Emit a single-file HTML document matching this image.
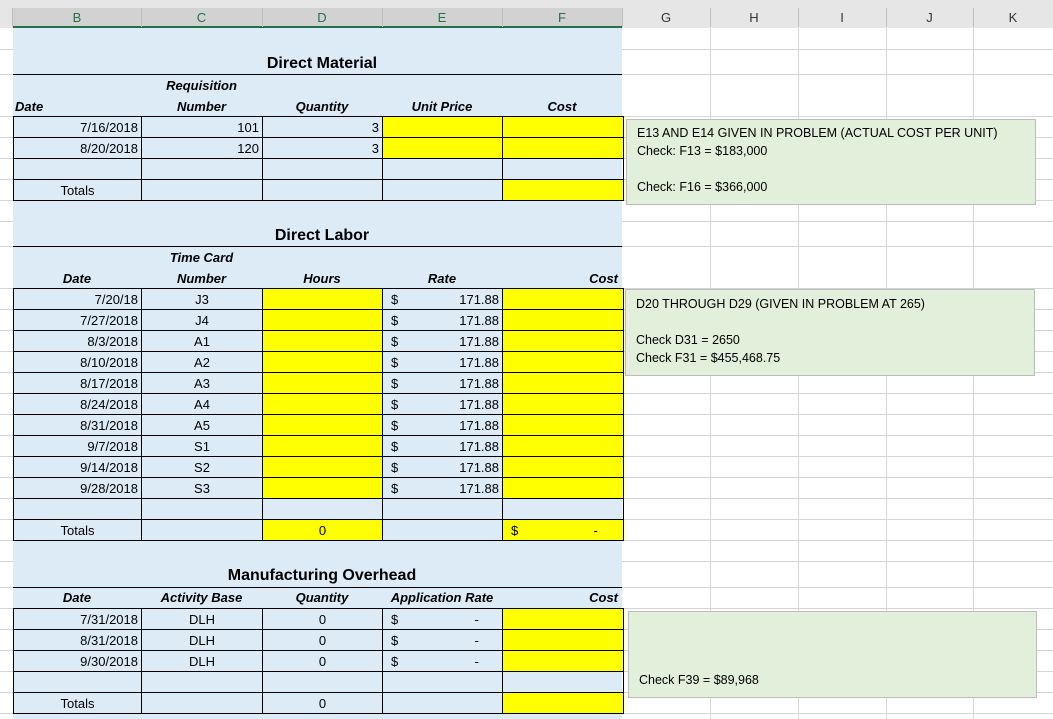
<!DOCTYPE html>
<html><head><meta charset="utf-8"><style>
*{margin:0;padding:0;box-sizing:border-box}
body{width:1053px;height:719px;overflow:hidden;background:#fff;position:relative;font-family:"Liberation Sans",Arial,sans-serif;font-size:13px;color:#000}
.a{position:absolute}
.hl{position:absolute;height:1px;background:#d4d4d4}
.vl{position:absolute;width:1px;background:#d4d4d4}
table{position:absolute;border-collapse:collapse;table-layout:fixed}
td{border:1px solid #000;height:21px;padding:0 3px;white-space:nowrap;font-size:13px;line-height:19px}
.y{background:#ffff00}
.r{text-align:right}.c{text-align:center}
.t{position:absolute;font-weight:bold;font-size:16px;white-space:nowrap}
.h{position:absolute;font-weight:bold;font-style:italic;white-space:nowrap;font-size:13px}
.box{position:absolute;background:#e2efda;border:1px solid #bcbcbc;padding:0 0 0 10px;font-size:12.5px;line-height:18px}
.dol{display:flex;justify-content:space-between;padding-left:5px}
</style></head><body>
<div class="a" style="left:0;top:0;width:1053px;height:28px;background:#e6e6e6"></div>
<div class="a" style="left:13px;top:8px;width:609px;height:19px;background:#d2d2d2"></div>
<div class="a" style="left:13px;top:26px;width:609px;height:2px;background:#217346"></div>
<div class="vl" style="left:12px;top:8px;height:19px;background:#bdbdbd"></div>
<div class="vl" style="left:141px;top:8px;height:19px;background:#bdbdbd"></div>
<div class="vl" style="left:262px;top:8px;height:19px;background:#bdbdbd"></div>
<div class="vl" style="left:382px;top:8px;height:19px;background:#bdbdbd"></div>
<div class="vl" style="left:502px;top:8px;height:19px;background:#bdbdbd"></div>
<div class="vl" style="left:622px;top:8px;height:19px;background:#bdbdbd"></div>
<div class="vl" style="left:710px;top:8px;height:19px;background:#bdbdbd"></div>
<div class="vl" style="left:798px;top:8px;height:19px;background:#bdbdbd"></div>
<div class="vl" style="left:886px;top:8px;height:19px;background:#bdbdbd"></div>
<div class="vl" style="left:973px;top:8px;height:19px;background:#bdbdbd"></div>
<div class="a" style="left:13px;top:10px;width:128px;text-align:center;color:#217346">B</div>
<div class="a" style="left:141px;top:10px;width:121px;text-align:center;color:#217346">C</div>
<div class="a" style="left:262px;top:10px;width:120px;text-align:center;color:#217346">D</div>
<div class="a" style="left:382px;top:10px;width:120px;text-align:center;color:#217346">E</div>
<div class="a" style="left:502px;top:10px;width:120px;text-align:center;color:#217346">F</div>
<div class="a" style="left:622px;top:10px;width:88px;text-align:center;color:#333">G</div>
<div class="a" style="left:710px;top:10px;width:88px;text-align:center;color:#333">H</div>
<div class="a" style="left:798px;top:10px;width:88px;text-align:center;color:#333">I</div>
<div class="a" style="left:886px;top:10px;width:87px;text-align:center;color:#333">J</div>
<div class="a" style="left:973px;top:10px;width:80px;text-align:center;color:#333">K</div>

<div class="a" style="left:13px;top:28px;width:609px;height:691px;background:#ddebf7"></div>

<div class="vl" style="left:710px;top:28px;height:691px"></div>
<div class="vl" style="left:798px;top:28px;height:691px"></div>
<div class="vl" style="left:886px;top:28px;height:691px"></div>
<div class="vl" style="left:973px;top:28px;height:691px"></div>
<div class="hl" style="left:0;width:13px;top:49px"></div><div class="hl" style="left:622px;width:431px;top:49px"></div>
<div class="hl" style="left:0;width:13px;top:74px"></div><div class="hl" style="left:622px;width:431px;top:74px"></div>
<div class="hl" style="left:0;width:13px;top:116px"></div><div class="hl" style="left:622px;width:431px;top:116px"></div>
<div class="hl" style="left:0;width:13px;top:137px"></div><div class="hl" style="left:622px;width:431px;top:137px"></div>
<div class="hl" style="left:0;width:13px;top:158px"></div><div class="hl" style="left:622px;width:431px;top:158px"></div>
<div class="hl" style="left:0;width:13px;top:179px"></div><div class="hl" style="left:622px;width:431px;top:179px"></div>
<div class="hl" style="left:0;width:13px;top:200px"></div><div class="hl" style="left:622px;width:431px;top:200px"></div>
<div class="hl" style="left:0;width:13px;top:221px"></div><div class="hl" style="left:622px;width:431px;top:221px"></div>
<div class="hl" style="left:0;width:13px;top:246px"></div><div class="hl" style="left:622px;width:431px;top:246px"></div>
<div class="hl" style="left:0;width:13px;top:288px"></div><div class="hl" style="left:622px;width:431px;top:288px"></div>
<div class="hl" style="left:0;width:13px;top:309px"></div><div class="hl" style="left:622px;width:431px;top:309px"></div>
<div class="hl" style="left:0;width:13px;top:330px"></div><div class="hl" style="left:622px;width:431px;top:330px"></div>
<div class="hl" style="left:0;width:13px;top:351px"></div><div class="hl" style="left:622px;width:431px;top:351px"></div>
<div class="hl" style="left:0;width:13px;top:372px"></div><div class="hl" style="left:622px;width:431px;top:372px"></div>
<div class="hl" style="left:0;width:13px;top:393px"></div><div class="hl" style="left:622px;width:431px;top:393px"></div>
<div class="hl" style="left:0;width:13px;top:414px"></div><div class="hl" style="left:622px;width:431px;top:414px"></div>
<div class="hl" style="left:0;width:13px;top:435px"></div><div class="hl" style="left:622px;width:431px;top:435px"></div>
<div class="hl" style="left:0;width:13px;top:456px"></div><div class="hl" style="left:622px;width:431px;top:456px"></div>
<div class="hl" style="left:0;width:13px;top:477px"></div><div class="hl" style="left:622px;width:431px;top:477px"></div>
<div class="hl" style="left:0;width:13px;top:498px"></div><div class="hl" style="left:622px;width:431px;top:498px"></div>
<div class="hl" style="left:0;width:13px;top:519px"></div><div class="hl" style="left:622px;width:431px;top:519px"></div>
<div class="hl" style="left:0;width:13px;top:540px"></div><div class="hl" style="left:622px;width:431px;top:540px"></div>
<div class="hl" style="left:0;width:13px;top:561px"></div><div class="hl" style="left:622px;width:431px;top:561px"></div>
<div class="hl" style="left:0;width:13px;top:587px"></div><div class="hl" style="left:622px;width:431px;top:587px"></div>
<div class="hl" style="left:0;width:13px;top:608px"></div><div class="hl" style="left:622px;width:431px;top:608px"></div>
<div class="hl" style="left:0;width:13px;top:629px"></div><div class="hl" style="left:622px;width:431px;top:629px"></div>
<div class="hl" style="left:0;width:13px;top:650px"></div><div class="hl" style="left:622px;width:431px;top:650px"></div>
<div class="hl" style="left:0;width:13px;top:671px"></div><div class="hl" style="left:622px;width:431px;top:671px"></div>
<div class="hl" style="left:0;width:13px;top:692px"></div><div class="hl" style="left:622px;width:431px;top:692px"></div>
<div class="hl" style="left:0;width:13px;top:713px"></div><div class="hl" style="left:622px;width:431px;top:713px"></div>

<div class="t" style="left:262px;width:120px;top:55px;text-align:center">Direct Material</div>
<div class="a" style="left:13px;top:74px;width:609px;height:1px;background:#000"></div>
<div class="h" style="left:141px;width:121px;text-align:center;top:78px">Requisition</div>
<div class="h" style="left:15px;top:99px">Date</div>
<div class="h" style="left:141px;width:121px;text-align:center;top:99px">Number</div>
<div class="h" style="left:262px;width:120px;text-align:center;top:99px">Quantity</div>
<div class="h" style="left:382px;width:120px;text-align:center;top:99px">Unit Price</div>
<div class="h" style="left:502px;width:120px;text-align:center;top:99px">Cost</div>
<table style="left:13px;top:116px;width:610px">
<colgroup><col style="width:128px"><col style="width:121px"><col style="width:120px"><col style="width:120px"><col style="width:121px"></colgroup>
<tr><td class="r">7/16/2018</td><td class="r">101</td><td class="r">3</td><td class="y"></td><td class="y"></td></tr>
<tr><td class="r">8/20/2018</td><td class="r">120</td><td class="r">3</td><td class="y"></td><td class="y"></td></tr>
<tr><td></td><td></td><td></td><td></td><td></td></tr>
<tr><td class="c">Totals</td><td></td><td></td><td></td><td class="y"></td></tr>
</table>

<div class="t" style="left:262px;width:120px;top:227px;text-align:center">Direct Labor</div>
<div class="a" style="left:13px;top:246px;width:609px;height:1px;background:#000"></div>
<div class="h" style="left:141px;width:121px;text-align:center;top:250px">Time Card</div>
<div class="h" style="left:13px;width:128px;text-align:center;top:271px">Date</div>
<div class="h" style="left:141px;width:121px;text-align:center;top:271px">Number</div>
<div class="h" style="left:262px;width:120px;text-align:center;top:271px">Hours</div>
<div class="h" style="left:382px;width:120px;text-align:center;top:271px">Rate</div>
<div class="h" style="left:502px;width:116px;text-align:right;top:271px">Cost</div>
<table style="left:13px;top:288px;width:610px">
<colgroup><col style="width:128px"><col style="width:121px"><col style="width:120px"><col style="width:120px"><col style="width:121px"></colgroup>
<tr><td class="r">7/20/18</td><td class="c">J3</td><td class="y"></td><td><div class="dol"><span>$</span><span>171.88</span></div></td><td class="y"></td></tr>
<tr><td class="r">7/27/2018</td><td class="c">J4</td><td class="y"></td><td><div class="dol"><span>$</span><span>171.88</span></div></td><td class="y"></td></tr>
<tr><td class="r">8/3/2018</td><td class="c">A1</td><td class="y"></td><td><div class="dol"><span>$</span><span>171.88</span></div></td><td class="y"></td></tr>
<tr><td class="r">8/10/2018</td><td class="c">A2</td><td class="y"></td><td><div class="dol"><span>$</span><span>171.88</span></div></td><td class="y"></td></tr>
<tr><td class="r">8/17/2018</td><td class="c">A3</td><td class="y"></td><td><div class="dol"><span>$</span><span>171.88</span></div></td><td class="y"></td></tr>
<tr><td class="r">8/24/2018</td><td class="c">A4</td><td class="y"></td><td><div class="dol"><span>$</span><span>171.88</span></div></td><td class="y"></td></tr>
<tr><td class="r">8/31/2018</td><td class="c">A5</td><td class="y"></td><td><div class="dol"><span>$</span><span>171.88</span></div></td><td class="y"></td></tr>
<tr><td class="r">9/7/2018</td><td class="c">S1</td><td class="y"></td><td><div class="dol"><span>$</span><span>171.88</span></div></td><td class="y"></td></tr>
<tr><td class="r">9/14/2018</td><td class="c">S2</td><td class="y"></td><td><div class="dol"><span>$</span><span>171.88</span></div></td><td class="y"></td></tr>
<tr><td class="r">9/28/2018</td><td class="c">S3</td><td class="y"></td><td><div class="dol"><span>$</span><span>171.88</span></div></td><td class="y"></td></tr>
<tr><td></td><td></td><td></td><td></td><td></td></tr>
<tr><td class="c">Totals</td><td></td><td class="y c">0</td><td></td><td class="y"><div class="dol"><span>$</span><span style="padding-right:22px">-</span></div></td></tr>
</table>

<div class="t" style="left:202px;width:240px;top:567px;text-align:center">Manufacturing Overhead</div>
<div class="a" style="left:13px;top:587px;width:609px;height:1px;background:#000"></div>
<div class="h" style="left:13px;width:128px;text-align:center;top:590px">Date</div>
<div class="h" style="left:141px;width:121px;text-align:center;top:590px">Activity Base</div>
<div class="h" style="left:262px;width:120px;text-align:center;top:590px">Quantity</div>
<div class="h" style="left:382px;width:120px;text-align:center;top:590px">Application Rate</div>
<div class="h" style="left:502px;width:116px;text-align:right;top:590px">Cost</div>
<table style="left:13px;top:608px;width:610px">
<colgroup><col style="width:128px"><col style="width:121px"><col style="width:120px"><col style="width:120px"><col style="width:121px"></colgroup>
<tr><td class="r">7/31/2018</td><td class="c">DLH</td><td class="c">0</td><td><div class="dol"><span>$</span><span style="padding-right:20px">-</span></div></td><td class="y"></td></tr>
<tr><td class="r">8/31/2018</td><td class="c">DLH</td><td class="c">0</td><td><div class="dol"><span>$</span><span style="padding-right:20px">-</span></div></td><td class="y"></td></tr>
<tr><td class="r">9/30/2018</td><td class="c">DLH</td><td class="c">0</td><td><div class="dol"><span>$</span><span style="padding-right:20px">-</span></div></td><td class="y"></td></tr>
<tr><td></td><td></td><td></td><td></td><td></td></tr>
<tr><td class="c">Totals</td><td></td><td class="c">0</td><td></td><td class="y"></td></tr>
</table>

<div class="box" style="left:626px;top:119px;width:410px;height:86px;padding-top:4px">E13 AND E14 GIVEN IN PROBLEM (ACTUAL COST PER UNIT)<br>Check: F13 = $183,000<br><br>Check: F16 = $366,000</div>
<div class="box" style="left:625px;top:289px;width:410px;height:87px;padding-top:5px">D20 THROUGH D29 (GIVEN IN PROBLEM AT 265)<br><br>Check D31 = 2650<br>Check F31 = $455,468.75</div>
<div class="box" style="left:628px;top:611px;width:409px;height:87px;padding-top:59px">Check F39 = $89,968</div>
</body></html>
